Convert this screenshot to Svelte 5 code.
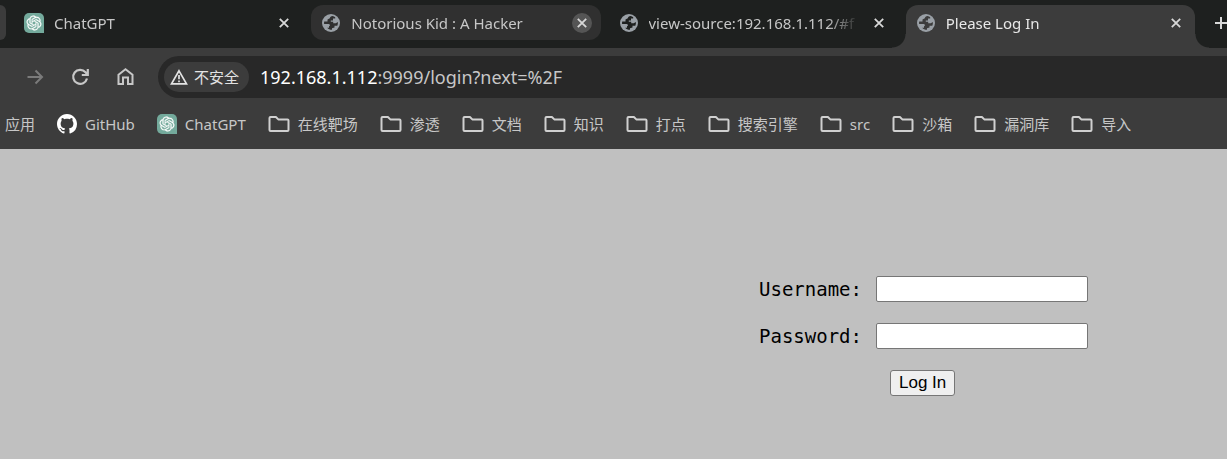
<script>
  const tabs = [
    { title: 'ChatGPT', icon: 'gpt', state: 'idle' },
    { title: 'Notorious Kid : A Hacker', icon: 'globe', state: 'hover' },
    { title: 'view-source:192.168.1.112/#f', icon: 'globe', state: 'idle' },
    { title: 'Please Log In', icon: 'globe', state: 'active' }
  ];
  const bookmarks = [
    { label: 'GitHub', icon: 'github' },
    { label: 'ChatGPT', icon: 'gpt' },
    { label: '在线靶场', icon: 'folder' },
    { label: '渗透', icon: 'folder' },
    { label: '文档', icon: 'folder' },
    { label: '知识', icon: 'folder' },
    { label: '打点', icon: 'folder' },
    { label: '搜索引擎', icon: 'folder' },
    { label: 'src', icon: 'folder' },
    { label: '沙箱', icon: 'folder' },
    { label: '漏洞库', icon: 'folder' },
    { label: '导入', icon: 'folder' }
  ];
  let username = $state('');
  let password = $state('');
  let address = $state('192.168.1.112:9999/login?next=%2F');
  const host = $derived(address.split(':')[0]);
  const rest = $derived(address.slice(host.length));
</script>

{#snippet icon(name)}
  {#if name === 'gpt'}
    <svg class="icon" width="20" height="20" viewBox="0 0 20 20" aria-hidden="true">
      <path d="M5 0H15a5 5 0 0 1 5 5V20H5a5 5 0 0 1-5-5V5a5 5 0 0 1 5-5z" fill="#74aa9c" />
      <g transform="translate(2.6 2.6) scale(.617)">
        <path fill="#fff" stroke="#fff" stroke-width=".4" d="M22.2819 9.8211a5.9847 5.9847 0 0 0-.5157-4.9108 6.0462 6.0462 0 0 0-6.5098-2.9A6.0651 6.0651 0 0 0 4.9807 4.1818a5.9847 5.9847 0 0 0-3.9977 2.9 6.0462 6.0462 0 0 0 .7427 7.0966 5.98 5.98 0 0 0 .511 4.9107 6.051 6.051 0 0 0 6.5146 2.9001A5.9847 5.9847 0 0 0 13.2599 24a6.0557 6.0557 0 0 0 5.7718-4.2058 5.9894 5.9894 0 0 0 3.9977-2.9001 6.0557 6.0557 0 0 0-.7475-7.0729zm-9.022 12.6081a4.4755 4.4755 0 0 1-2.8764-1.0408l.1419-.0804 4.7783-2.7582a.7948.7948 0 0 0 .3927-.6813v-6.7369l2.02 1.1686a.071.071 0 0 1 .038.052v5.5826a4.504 4.504 0 0 1-4.4945 4.4944zm-9.6607-4.1254a4.4708 4.4708 0 0 1-.5346-3.0137l.142.0852 4.783 2.7582a.7712.7712 0 0 0 .7806 0l5.8428-3.3685v2.3324a.0804.0804 0 0 1-.0332.0615L9.74 19.9502a4.4992 4.4992 0 0 1-6.1408-1.6464zM2.3408 7.8956a4.485 4.485 0 0 1 2.3655-1.9728V11.6a.7664.7664 0 0 0 .3879.6765l5.8144 3.3543-2.0201 1.1685a.0757.0757 0 0 1-.071 0l-4.8303-2.7865A4.504 4.504 0 0 1 2.3408 7.872zm16.5963 3.8558L13.1038 8.364 15.1192 7.2a.0757.0757 0 0 1 .071 0l4.8303 2.7913a4.4944 4.4944 0 0 1-.6765 8.1042v-5.6772a.79.79 0 0 0-.407-.667zm2.0107-3.0231l-.142-.0852-4.7735-2.7818a.7759.7759 0 0 0-.7854 0L9.409 9.2297V6.8974a.0662.0662 0 0 1 .0284-.0615l4.8303-2.7866a4.4992 4.4992 0 0 1 6.6802 4.66zM8.3065 12.863l-2.02-1.1638a.0804.0804 0 0 1-.038-.0567V6.0742a4.4992 4.4992 0 0 1 7.3757-3.4537l-.142.0805L8.704 5.459a.7948.7948 0 0 0-.3927.6813zm1.0976-2.3654l2.602-1.4998 2.6069 1.4998v2.9994l-2.5974 1.4997-2.6067-1.4997Z" />
      </g>
    </svg>
  {:else if name === 'github'}
    <svg class="icon" width="20" height="20" viewBox="0 0 16 16" aria-hidden="true">
      <path fill="#fff" d="M8 0C3.58 0 0 3.58 0 8c0 3.54 2.29 6.53 5.47 7.59.4.07.55-.17.55-.38 0-.19-.01-.82-.01-1.49-2.01.37-2.53-.49-2.69-.94-.09-.23-.48-.94-.82-1.13-.28-.15-.68-.52-.01-.53.63-.01 1.08.58 1.23.82.72 1.21 1.87.87 2.33.66.07-.52.28-.87.51-1.07-1.78-.2-3.64-.89-3.64-3.95 0-.87.31-1.59.82-2.15-.08-.2-.36-1.02.08-2.12 0 0 .67-.21 2.2.82.64-.18 1.32-.27 2-.27s1.36.09 2 .27c1.53-1.04 2.2-.82 2.2-.82.44 1.1.16 1.92.08 2.12.51.56.82 1.27.82 2.15 0 3.07-1.87 3.75-3.65 3.95.29.25.54.73.54 1.48 0 1.07-.01 1.93-.01 2.2 0 .21.15.46.55.38A8.01 8.01 0 0 0 16 8c0-4.42-3.58-8-8-8z" />
    </svg>
  {:else if name === 'globe'}
    <svg class="icon" width="20" height="20" viewBox="0 0 20 20" aria-hidden="true">
      <circle cx="10" cy="10" r="9" fill="#9aa0a6" />
      <path class="land" d="M11.6 3C9.800 3.200 9 4 8.800 5.300L6.500 6.600V8.600H3.200C3 9.400 3 10.200 3.100 10.900H7.600C9.200 10.900 9.300 13.200 8 13.300V14.800H6.200C7.500 16.300 9.500 17 11 16.800V15.200L13.500 14.400V12.800H16.300C16.900 11.500 17 10 16.800 9L14.800 10.200H12.200V8.800H9.800V7.400H12V5.600H14.200V4.300C13.500 3.600 12.600 3.200 11.600 3Z" />
    </svg>
  {:else if name === 'folder'}
    <svg class="icon" width="22" height="18" viewBox="0 0 22 18" fill="none" stroke="#d0d0d0" stroke-width="2" stroke-linejoin="round" aria-hidden="true">
      <path d="M1.500 3Q1.500 2 2.500 2H7.900L10.300 4.400H19.500Q20.500 4.400 20.500 5.400V15Q20.500 16 19.500 16H2.500Q1.500 16 1.500 15Z" />
    </svg>
  {/if}
{/snippet}

<div class="browser">
  <header>
    <nav class="strip" aria-label="Tabs">
      <span class="sliver"></span>
      {#each tabs as tab}
        <div class="tab {tab.state}">
          {@render icon(tab.icon)}
          <span class="title">{tab.title}</span>
          <button class="close" aria-label="Close {tab.title}">
            <svg width="10" height="10" viewBox="0 0 10 10" stroke="currentColor" stroke-width="1.800"><path d="M.8.8 9.200 9.200M9.200.8.8 9.200" /></svg>
          </button>
        </div>
      {/each}
      <button class="new" aria-label="New tab">
        <svg width="14" height="14" viewBox="0 0 14 14" stroke="currentColor" stroke-width="2"><path d="M7 1V13M1 7H13" /></svg>
      </button>
    </nav>

    <div class="toolbar">
      <button class="tool dim" aria-label="Forward">
        <svg width="20" height="20" viewBox="0 0 20 20" fill="none" stroke="currentColor" stroke-width="2"><path d="M2.500 10H17M10.500 3.500 17 10 10.500 16.500" /></svg>
      </button>
      <button class="tool" aria-label="Reload">
        <svg width="20" height="20" viewBox="0 0 20 20" fill="none" stroke="currentColor" stroke-width="2.200"><path d="M17 11.500A7 7 0 1 1 15.500 5.200L17.500 7.500M17.800 2V8H11.800" /></svg>
      </button>
      <button class="tool" aria-label="Home">
        <svg width="20" height="20" viewBox="0 0 20 20" fill="none" stroke="currentColor" stroke-width="2"><path d="M3.500 7.700 10.500 2.300 17.500 7.700V17H13V10.500H8V17H3.500Z" /></svg>
      </button>
      <div class="omnibox">
        <button class="chip">
          <svg width="18" height="16" viewBox="0 0 18 16" fill="none" stroke="currentColor" stroke-width="1.700" aria-hidden="true"><path d="M9 1.800 16.500 14.800H1.500Z" /><path d="M9 6V10.200M9 11.500V13.200" /></svg>
          不安全
        </button>
        <a class="url" href="#top"><b>{host}</b>{rest}</a>
      </div>
    </div>

    <nav class="bookmarks" aria-label="Bookmarks">
      <a href="#apps">应用</a>
      {#each bookmarks as mark}
        <a href="#top">{@render icon(mark.icon)}<span>{mark.label}</span></a>
      {/each}
    </nav>
  </header>

  <main>
    <form onsubmit={(e) => e.preventDefault()}>
      <label for="user">Username:</label>
      <input id="user" type="text" bind:value={username} />
      <label for="pass">Password:</label>
      <input id="pass" type="password" bind:value={password} />
      <button class="submit">Log In</button>
    </form>
  </main>
</div>

<style>
  :global(body) { margin: 0; background: #c0c0c0; }
  .browser { font: 16px/20px "Noto Sans", "Noto Sans CJK SC", sans-serif; color: #c7c7c7; overflow: hidden; }
  button { font: inherit; color: inherit; border: 0; background: none; padding: 0; }
  a { color: inherit; text-decoration: none; }
  svg { display: block; flex: none; }
  header { background: #3c3c3c; }
  .strip { display: flex; gap: 8px; height: 48px; background: #1e201f; }
  .sliver { flex: none; width: 6px; height: 35px; margin-top: 5px; background: #3c3c3c; border-radius: 0 12px 12px 0; }
  .tab { position: relative; display: flex; align-items: center; flex: 1; min-width: 0; height: 35px; margin-top: 5px; padding: 0 9px 0 10px; box-sizing: border-box; border-radius: 12px; font-size: 15px; }
  .title { flex: 1; min-width: 0; margin-left: 10px; margin-right: 10px; overflow: hidden; white-space: nowrap; mask-image: linear-gradient(to right, #000 calc(100% - 32px), transparent); }
  .close { display: grid; place-items: center; width: 20px; height: 20px; border-radius: 50%; flex: none; color: #d8d8d8; }
  .land { fill: #1e201f; }
  .hover { background: #303030; }
  .hover .land { fill: #303030; }
  .hover .close { background: #555; }
  .active { height: 43px; padding-bottom: 8px; background: #3c3c3c; border-radius: 12px 12px 0 0; color: #e8e8e8; }
  .active .land { fill: #3c3c3c; }
  .active::before, .active::after { content: ""; position: absolute; bottom: 0; width: 14px; height: 14px; }
  .active::before { right: 100%; background: radial-gradient(circle at 0 0, transparent 13px, #3c3c3c 14px); }
  .active::after { left: 100%; background: radial-gradient(circle at 100% 0, transparent 13px, #3c3c3c 14px); }
  .new { width: 24px; padding: 0 0 2px 11px; flex: none; color: #d8d8d8; }
  .toolbar { display: flex; align-items: center; height: 58px; padding-left: 25px; }
  .tool { width: 20px; margin-right: 25px; color: #c7c7c7; }
  .dim { color: #7b7b7b; }
  .omnibox { flex: 1; display: flex; align-items: center; gap: 11px; height: 42px; margin-left: -2px; padding-left: 6px; background: #282828; border-radius: 21px 0 0 21px; }
  .chip { display: flex; align-items: center; gap: 6px; height: 30px; padding: 0 10px 0 6px; border-radius: 15px; background: #3c3c3c; color: #e3e3e3; font-size: 15px; white-space: nowrap; }
  .url { font-size: 18px; line-height: 24px; white-space: nowrap; }
  .url b { font-weight: 400; color: #fff; }
  .bookmarks { display: flex; align-items: center; gap: 22px; height: 43px; padding: 0 0 8px 5px; box-sizing: border-box; font-size: 15px; white-space: nowrap; }
  .bookmarks a { display: flex; align-items: center; gap: 8px; flex: none; }
  main { padding: 127px 139px 63px 0; }
  form { display: grid; grid-template-columns: max-content 212px; justify-content: end; align-items: center; column-gap: 14px; row-gap: 21px; color: #000; }
  label { font: 19px/24px "DejaVu Sans Mono", monospace; }
  input { width: 100%; height: 26px; box-sizing: border-box; border: 1px solid #767676; border-radius: 2px; background: #fff; font: 17px "Liberation Sans", sans-serif; }
  .submit { grid-column: 2; justify-self: start; height: 26px; margin-left: 14px; padding: 0 8px; border: 1px solid #767676; border-radius: 3px; background: #efefef; color: #000; font: 17px "Liberation Sans", sans-serif; }
</style>
